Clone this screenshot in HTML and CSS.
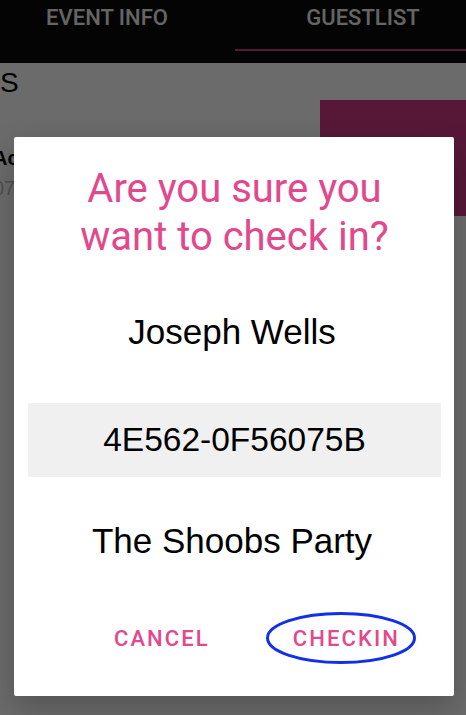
FILE: index.html
```html
<!DOCTYPE html>
<html lang="en">
<head>
<meta charset="utf-8">
<title>Guestlist check in</title>
<link rel="stylesheet" href="styles.css">
</head>
<body>
<div class="screen">
  <header class="tabbar">
    <nav class="tabs">
      <div class="tab">EVENT INFO</div>
      <div class="tab active">GUESTLIST</div>
    </nav>
  </header>
  <main class="content">
    <div class="section-title">S</div>
    <div class="guest-row">
      <div class="guest-info">
        <div class="guest-name">Access</div>
        <div class="guest-code">0781</div>
      </div>
      <div class="guest-action"></div>
    </div>
  </main>
  <div class="scrim">
    <div class="dialog">
      <h1 class="dialog-title">Are you sure you want to check in?</h1>
      <div class="dialog-line guest-fullname">Joseph Wells</div>
      <div class="dialog-line ticket-code">4E562-0F56075B</div>
      <div class="dialog-line event-name">The Shoobs Party</div>
      <div class="dialog-actions">
        <button class="dialog-btn cancel-btn">CANCEL</button>
        <button class="dialog-btn checkin-btn">CHECKIN
          <svg class="circle-mark" width="150" height="52" viewBox="0 0 150 52"><ellipse cx="75" cy="26" rx="73.5" ry="24.5" fill="none" stroke="#1230e8" stroke-width="3"/></svg>
        </button>
      </div>
    </div>
  </div>
</div>
</body>
</html>
```
FILE: styles.css
```css
html, body {
  margin: 0;
  padding: 0;
}
body {
  width: 466px;
  height: 715px;
  overflow: hidden;
  background: #ffffff;
  font-family: "Liberation Sans", Arial, sans-serif;
}
.screen {
  position: relative;
  width: 466px;
  height: 715px;
  overflow: hidden;
}
.tabbar {
  background: #0a0a0a;
  height: 63px;
  overflow: hidden;
}
.tabs {
  display: flex;
  width: 512px;
  margin-left: -21px;
}
.tab {
  flex: 1;
  height: 51px;
  box-sizing: border-box;
  padding-top: 5px;
  border-bottom: 2px solid transparent;
  text-align: center;
  font-family: Roboto, "Liberation Sans", sans-serif;
  font-weight: 500;
  font-size: 22px;
  line-height: 26px;
  color: #f0f0f0;
}
.tab.active {
  border-bottom-color: #d03c88;
}
.content {
  padding-top: 4px;
}
.section-title {
  font-size: 28px;
  line-height: 32px;
  color: #000;
}
.guest-row {
  display: flex;
  justify-content: space-between;
  margin-top: 1px;
}
.guest-info {
  padding-top: 46px;
  margin-left: -7px;
}
.guest-name {
  font-weight: bold;
  font-size: 20px;
  line-height: 24px;
  color: #000;
}
.guest-code {
  margin-top: 6px;
  font-size: 20px;
  line-height: 24px;
  color: #bdbdbd;
}
.guest-action {
  width: 146px;
  height: 116px;
  background: #cf3a86;
}
.scrim {
  position: absolute;
  inset: 0;
  background: rgba(0, 0, 0, 0.58);
}
.dialog {
  position: absolute;
  left: 14px;
  top: 137px;
  width: 440px;
  box-sizing: border-box;
  padding: 28px 13px 44px 14px;
  background: #fff;
  border-radius: 2px;
  box-shadow: 0 12px 30px rgba(0, 0, 0, 0.22);
  text-align: center;
}
.dialog-title {
  margin: 0 50px;
  font-family: Roboto, "Liberation Sans", sans-serif;
  font-weight: 400;
  font-size: 40px;
  line-height: 48px;
  color: #e2488c;
}
.dialog-line {
  margin-top: 51px;
  font-size: 35px;
  line-height: 40px;
  color: #000;
}
.guest-fullname,
.event-name {
  padding-right: 5px;
}
.ticket-code {
  background: #f0f0f0;
  padding: 17px 0;
  font-size: 33.5px;
}
.event-name {
  margin-top: 44px;
}
.dialog-actions {
  display: flex;
  justify-content: flex-end;
  align-items: center;
  gap: 83px;
  margin-top: 65px;
  padding-right: 41px;
}
.dialog-btn {
  position: relative;
  margin: 0;
  padding: 0;
  border: 0;
  background: none;
  font-family: Roboto, "Liberation Sans", sans-serif;
  font-weight: 500;
  font-size: 22px;
  line-height: 26px;
  letter-spacing: 2.1px;
  color: #e2488c;
}
.circle-mark {
  position: absolute;
  left: -27px;
  top: -14px;
  overflow: visible;
}
```
